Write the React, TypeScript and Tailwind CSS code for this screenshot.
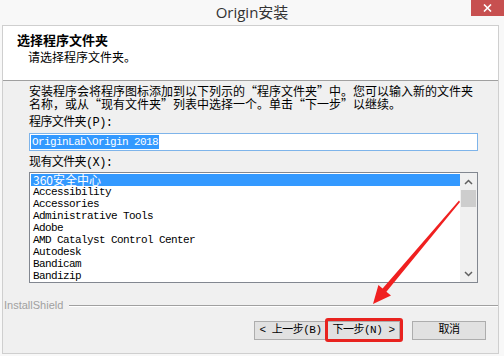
import React from "react";

const items = [
  "360安全中心",
  "Accessibility",
  "Accessories",
  "Administrative Tools",
  "Adobe",
  "AMD Catalyst Control Center",
  "Autodesk",
  "Bandicam",
  "Bandizip",
];

const mono = "font-['Liberation_Mono','Noto_Sans_CJK_SC',monospace]";
const cjk = "font-['Noto_Sans_CJK_SC','Liberation_Sans',sans-serif]";

function WinButton({ children }: { children: React.ReactNode }) {
  return (
    <div
      className={`h-[19px] w-full flex items-center justify-center bg-[#e1e1e1] border border-[#adadad] text-[11px] leading-none text-black ${mono} tracking-[-0.5px]`}
    >
      {children}
    </div>
  );
}

export default function App() {
  return (
    <div className="relative w-[504px] h-[356px] bg-[#f8f8f8] flex flex-col overflow-hidden">
      {/* Title bar */}
      <div className="h-[25px] flex items-center justify-center">
        <span className={`text-[15px] text-[#333] font-['Open_Sans','Noto_Sans_CJK_SC',sans-serif]`}>
          Origin安装
        </span>
      </div>
      <div className="absolute top-0 right-0 w-[33px] h-[16px] bg-[#c75050] flex items-center justify-center">
        <svg width="9" height="8" viewBox="0 0 9 8">
          <path d="M1 0.5 L8 7.5 M8 0.5 L1 7.5" stroke="white" strokeWidth="1.6" />
        </svg>
      </div>

      {/* Client area */}
      <div className="flex-1 ml-[2px] mr-[5px] mb-[2px] border border-[#cfcfcf] flex flex-col">
        {/* Header */}
        <div className="h-[55px] bg-white border-b border-[#a0a0a0] pl-[14px] pt-[5px]">
          <div className={`text-[13px] leading-[17px] font-bold text-black ${cjk}`}>选择程序文件夹</div>
          <div className={`text-[12px] leading-[17px] text-black pl-[11px] ${cjk}`}>请选择程序文件夹。</div>
        </div>

        {/* Body */}
        <div className="flex-1 bg-[#f0f0f0] flex flex-col">
          <div className="pl-[26px] pr-[20px] pt-[3px] flex flex-col">
            <p className={`text-[12px] leading-[13px] text-black ${cjk}`}>
              安装程序会将程序图标添加到以下列示的“程序文件夹”中。您可以输入新的文件夹
              <br />
              名称，或从“现有文件夹”列表中选择一个。单击“下一步”以继续。
            </p>

            <div className={`mt-[7px] text-[12px] leading-[12px] text-black ${mono} tracking-[-0.6px]`}>
              程序文件夹(P):
            </div>
            <div className="mt-[4px] h-[18px] bg-white border border-[#7eb4ea] flex items-center pl-[1px]">
              <span
                className={`h-[14px] flex items-center bg-[#3399ff] text-white text-[11px] leading-none px-[1px] ${mono} tracking-[-0.6px]`}
              >
                OriginLab\Origin 2018
              </span>
            </div>

            <div className={`mt-[6px] text-[12px] leading-[12px] text-black ${mono} tracking-[-0.6px]`}>
              现有文件夹(X):
            </div>
            <div className="mt-[3px] h-[111px] bg-white border border-[#828790] flex">
              <div className="flex-1 pt-[1px] pl-[1px]">
                {items.map((it, i) => (
                  <div
                    key={it}
                    className={`h-[12px] flex items-center pl-[2px] text-[11px] leading-[12px] ${mono} tracking-[-0.6px] ${
                      i === 0 ? "bg-[#3399ff] text-white" : "text-black"
                    }`}
                  >
                    {i === 0 ? (
                      <span className="text-[12px] leading-[12px] tracking-normal font-['Noto_Sans_CJK_SC',sans-serif]">
                        360安全中心
                      </span>
                    ) : (
                      it
                    )}
                  </div>
                ))}
              </div>
              {/* Scrollbar */}
              <div className="w-[17px] bg-[#f0f0f0] flex flex-col">
                <div className="h-[17px] flex items-center justify-center">
                  <svg width="9" height="6" viewBox="0 0 9 6">
                    <polyline points="1,5 4.5,1.5 8,5" fill="none" stroke="#606060" strokeWidth="1.5" />
                  </svg>
                </div>
                <div className="h-[17px] mx-[1px] bg-[#cdcdcd]" />
                <div className="flex-1" />
                <div className="h-[17px] flex items-center justify-center">
                  <svg width="9" height="6" viewBox="0 0 9 6">
                    <polyline points="1,1 4.5,4.5 8,1" fill="none" stroke="#606060" strokeWidth="1.5" />
                  </svg>
                </div>
              </div>
            </div>
          </div>

          {/* InstallShield separator */}
          <div className="mt-[16px] h-[13px] flex items-center pl-[1px]">
            <span className="text-[11px] leading-none text-[#a0a0a0] font-['Liberation_Sans',sans-serif]">
              InstallShield
            </span>
            <div className="flex-1 ml-[6px] border-t border-[#a0a0a0] border-b-white border-b" />
          </div>

          {/* Buttons */}
          <div className="mt-[9px] flex justify-end pr-[12px]">
            <div className="w-[73px]">
              <WinButton>&lt; 上一步(B)</WinButton>
            </div>
            <div className="w-[73px] relative">
              <WinButton>下一步(N) &gt;</WinButton>
              <div className="absolute -left-[2px] -right-[3px] -top-[3px] -bottom-[2px] border-[3px] border-[#e8231f] rounded-[3px]" />
            </div>
            <div className="w-[74px] ml-[12px]">
              <WinButton>取消</WinButton>
            </div>
          </div>
        </div>
      </div>

      {/* Red annotation arrow */}
      <svg className="absolute left-0 top-0 pointer-events-none" width="504" height="356" viewBox="0 0 504 356">
        <polygon
          points="459,200.5 460,202 386.4,291.8 391,295.5 373,304 378.4,285 382.6,288.6"
          fill="#f02020"
        />
      </svg>
    </div>
  );
}
